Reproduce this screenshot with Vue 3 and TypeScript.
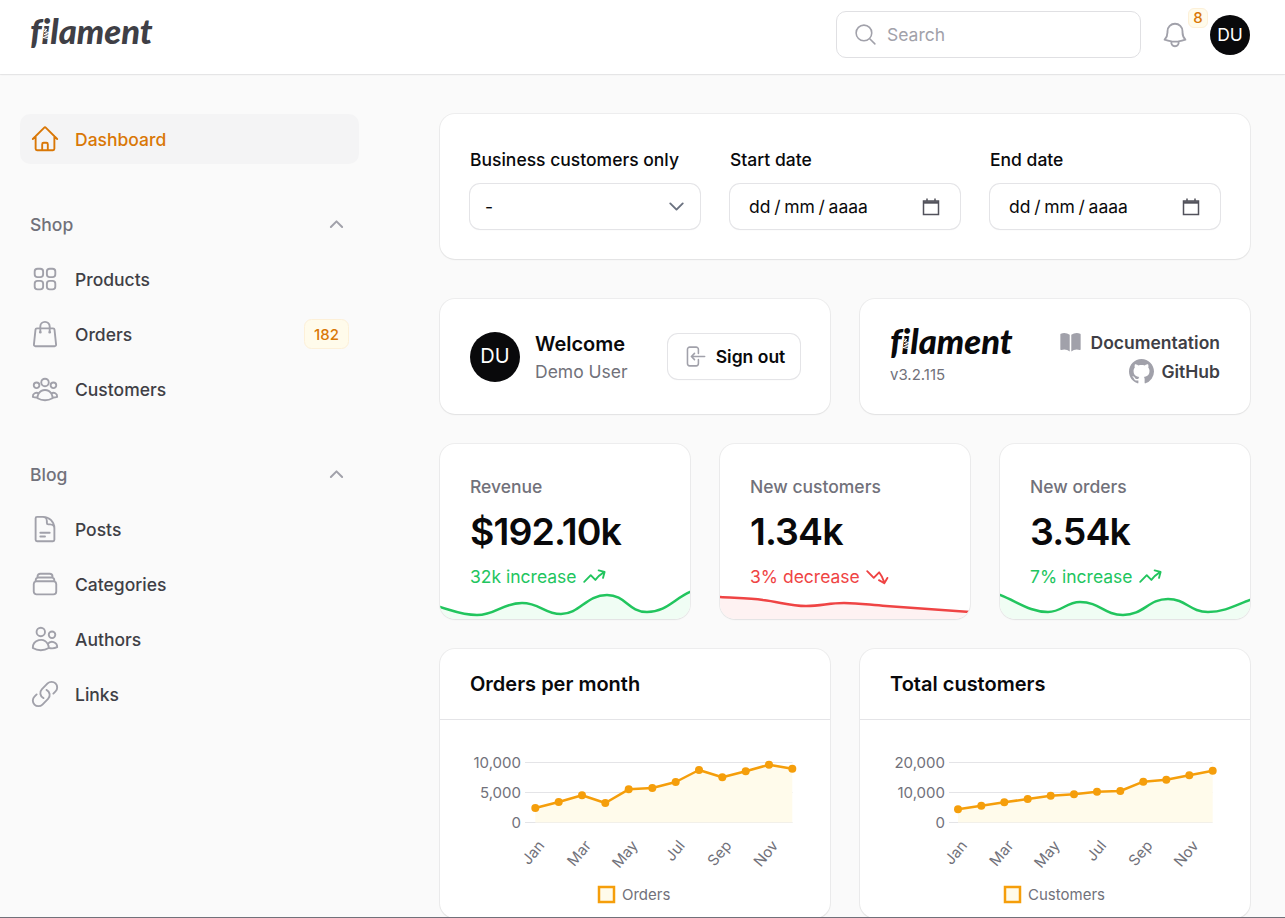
<template>
  <div class="page">
    <header class="topbar">
      <div class="logo">f<span class="logo-i">i<svg viewBox="0 0 9 14"><path d="M0 2.5 5 3.5 2 5.5 7 6.5 2 8.5 7 9.5 1 11.5 6 12.5" /></svg></span>lament</div>
      <div class="top-actions">
        <div class="search">
          <svg class="search-icon" viewBox="0 0 24 24"><path :d="icons.search" /></svg>
          <span>Search</span>
        </div>
        <div class="bell">
          <svg viewBox="0 0 24 24"><path :d="icons.bell" /></svg>
          <span class="bell-badge">8</span>
        </div>
        <div class="avatar small">DU</div>
      </div>
    </header>

    <div class="layout">
      <aside class="sidebar">
        <a class="nav-item active">
          <svg viewBox="0 0 24 24"><path :d="icons.home" /></svg>
          <span>Dashboard</span>
        </a>
        <section v-for="group in navGroups" :key="group.label" class="nav-group">
          <div class="group-label">
            <span>{{ group.label }}</span>
            <svg viewBox="0 0 20 20"><path :d="icons.chevronUp" /></svg>
          </div>
          <div class="group-items">
            <a v-for="item in group.items" :key="item.label" class="nav-item">
              <svg viewBox="0 0 24 24"><path :d="item.icon" /></svg>
              <span>{{ item.label }}</span>
              <em v-if="item.badge" class="nav-badge">{{ item.badge }}</em>
            </a>
          </div>
        </section>
      </aside>

      <main class="content">
        <section class="card filters">
          <div class="field">
            <label>Business customers only</label>
            <div class="input">
              <span class="dash">-</span>
              <svg class="chevron" viewBox="0 0 20 20"><path d="m5 7.5 5 5 5-5" /></svg>
            </div>
          </div>
          <div v-for="label in ['Start date', 'End date']" :key="label" class="field">
            <label>{{ label }}</label>
            <div class="input date">
              <span>dd / mm / aaaa</span>
              <svg class="calendar" viewBox="0 0 18 18">
                <path d="M5 .5v3M13 .5v3M1.5 3h15v13.5h-15Z" />
                <path class="calendar-top" d="M1.5 4.5h15" />
              </svg>
            </div>
          </div>
        </section>

        <div class="two-col">
          <section class="card account">
            <div class="avatar">DU</div>
            <div class="account-text">
              <strong>Welcome</strong>
              <span>Demo User</span>
            </div>
            <button class="sign-out">
              <svg viewBox="0 0 24 24"><path :d="icons.signOut" /></svg>
              Sign out
            </button>
          </section>
          <section class="card about">
            <div class="about-brand">
              <div class="logo dark">f<span class="logo-i">i<svg viewBox="0 0 9 14"><path d="M0 2.5 5 3.5 2 5.5 7 6.5 2 8.5 7 9.5 1 11.5 6 12.5" /></svg></span>lament</div>
              <span class="version">v3.2.115</span>
            </div>
            <div class="about-links">
              <a>
                <svg class="solid" viewBox="0 0 24 24"><path :d="icons.book" /></svg>
                Documentation
              </a>
              <a>
                <svg class="solid" viewBox="0 0 16 16"><path :d="icons.github" /></svg>
                GitHub
              </a>
            </div>
          </section>
        </div>

        <div class="three-col">
          <section v-for="stat in stats" :key="stat.label" class="card stat">
            <div class="stat-body">
              <div class="stat-label">{{ stat.label }}</div>
              <div class="stat-value">{{ stat.value }}</div>
              <div class="stat-desc" :class="stat.tone">
                {{ stat.desc }}
                <svg viewBox="0 0 20 20"><path :d="stat.tone === 'up' ? icons.trendUp : icons.trendDown" /></svg>
              </div>
            </div>
            <svg class="spark" :class="stat.tone" viewBox="0 0 250 30">
              <path class="spark-fill" :d="stat.spark + ' V30 H0 Z'" />
              <path class="spark-line" :d="stat.spark" />
            </svg>
          </section>
        </div>

        <div class="two-col">
          <section v-for="chart in charts" :key="chart.title" class="card chart-card">
            <h3>{{ chart.title }}</h3>
            <svg class="chart" viewBox="0 0 390 198">
              <g v-for="(tick, i) in chart.ticks" :key="tick">
                <line class="grid" :x1="chart.axisX" :x2="352.5" :y1="42.5 + i * 30" :y2="42.5 + i * 30" />
                <text class="tick" :x="chart.axisX - 4" :y="47.5 + i * 30" text-anchor="end">{{ tick }}</text>
              </g>
              <path class="area" :d="areaPath(chart.points)" />
              <polyline class="line" :points="chart.points.map(p => p.join(',')).join(' ')" />
              <circle v-for="p in chart.points" :key="p[0]" class="dot" :cx="p[0]" :cy="p[1]" r="4" />
              <text
                v-for="(month, i) in months"
                :key="month"
                class="tick"
                text-anchor="end"
                :transform="`translate(${chart.points[i * 2][0] + 10} 126) rotate(-50)`"
              >{{ month }}</text>
              <rect class="legend-box" :x="chart.legendX" y="167" width="15" height="15" />
              <text class="tick" :x="chart.legendX + 23" y="180">{{ chart.legend }}</text>
            </svg>
          </section>
        </div>
      </main>
    </div>
  </div>
</template>

<script setup lang="ts">
const icons = {
  search: 'm21 21-5.197-5.197m0 0A7.5 7.5 0 1 0 5.196 5.196a7.5 7.5 0 0 0 10.607 10.607Z',
  bell: 'M14.857 17.082a23.848 23.848 0 0 0 5.454-1.31A8.967 8.967 0 0 1 18 9.75V9A6 6 0 0 0 6 9v.75a8.967 8.967 0 0 1-2.312 6.022c1.733.64 3.56 1.085 5.455 1.31m5.714 0a24.255 24.255 0 0 1-5.714 0m5.714 0a3 3 0 1 1-5.714 0',
  home: 'm2.25 12 8.954-8.955c.44-.439 1.152-.439 1.591 0L21.75 12M4.5 9.75v10.125c0 .621.504 1.125 1.125 1.125H9.75v-4.875c0-.621.504-1.125 1.125-1.125h2.25c.621 0 1.125.504 1.125 1.125V21h4.125c.621 0 1.125-.504 1.125-1.125V9.75M8.25 21h8.25',
  chevronUp: 'm5.5 12 4.5-4.5 4.5 4.5',
  signOut: 'M15.75 9V5.25A2.25 2.25 0 0 0 13.5 3h-6a2.25 2.25 0 0 0-2.25 2.25v13.5A2.25 2.25 0 0 0 7.5 21h6a2.25 2.25 0 0 0 2.25-2.25V15M12 9l-3 3m0 0 3 3m-3-3h12.75',
  book: 'M11.25 4.533A9.707 9.707 0 0 0 6 3a9.735 9.735 0 0 0-3.25.555.75.75 0 0 0-.5.707v14.25a.75.75 0 0 0 1 .707A8.237 8.237 0 0 1 6 18.75c1.995 0 3.823.707 5.25 1.886V4.533ZM12.75 20.636A8.214 8.214 0 0 1 18 18.75c.966 0 1.89.166 2.75.47a.75.75 0 0 0 1-.708V4.262a.75.75 0 0 0-.5-.707A9.735 9.735 0 0 0 18 3a9.707 9.707 0 0 0-5.25 1.533v16.103Z',
  github: 'M8 0C3.58 0 0 3.58 0 8c0 3.54 2.29 6.53 5.47 7.59.4.07.55-.17.55-.38 0-.19-.01-.82-.01-1.49-2.01.37-2.53-.49-2.69-.94-.09-.23-.48-.94-.82-1.13-.28-.15-.68-.52-.01-.53.63-.01 1.08.58 1.23.82.72 1.21 1.87.87 2.33.66.07-.52.28-.87.51-1.07-1.78-.2-3.64-.89-3.64-3.95 0-.87.31-1.59.82-2.15-.08-.2-.36-1.02.08-2.12 0 0 .67-.21 2.2.82.64-.18 1.32-.27 2-.27.68 0 1.36.09 2 .27 1.53-1.04 2.2-.82 2.2-.82.44 1.1.16 1.92.08 2.12.51.56.82 1.27.82 2.15 0 3.07-1.87 3.75-3.65 3.95.29.25.54.73.54 1.48 0 1.07-.01 1.93-.01 2.2 0 .21.15.46.55.38A8.013 8.013 0 0 0 16 8c0-4.42-3.58-8-8-8z',
  trendUp: 'M12.577 4.878a.75.75 0 0 1 .919-.53l4.78 1.281a.75.75 0 0 1 .531.919l-1.281 4.78a.75.75 0 0 1-1.449-.387l.81-3.022a19.407 19.407 0 0 0-5.594 5.203.75.75 0 0 1-1.139.093L7 10.06l-4.72 4.72a.75.75 0 0 1-1.06-1.061l5.25-5.25a.75.75 0 0 1 1.06 0l3.074 3.073a20.923 20.923 0 0 1 5.545-4.931l-3.042-.815a.75.75 0 0 1-.53-.919Z',
  trendDown: 'M1.22 5.222a.75.75 0 0 1 1.06 0L7 9.942l3.768-3.769a.75.75 0 0 1 1.113.058 20.908 20.908 0 0 1 3.813 7.254l1.574-2.727a.75.75 0 0 1 1.3.75l-2.475 4.286a.75.75 0 0 1-1.025.275l-4.287-2.475a.75.75 0 0 1 .75-1.3l2.71 1.565a19.422 19.422 0 0 0-3.013-6.024L7.53 11.533a.75.75 0 0 1-1.06 0l-5.25-5.25a.75.75 0 0 1 0-1.06Z',
}

interface NavItem {
  label: string
  icon: string
  badge?: string
}

const navGroups: { label: string; items: NavItem[] }[] = [
  {
    label: 'Shop',
    items: [
      { label: 'Products', icon: 'M3.75 6A2.25 2.25 0 0 1 6 3.75h2.25A2.25 2.25 0 0 1 10.5 6v2.25a2.25 2.25 0 0 1-2.25 2.25H6a2.25 2.25 0 0 1-2.25-2.25V6ZM3.75 15.75A2.25 2.25 0 0 1 6 13.5h2.25a2.25 2.25 0 0 1 2.25 2.25V18a2.25 2.25 0 0 1-2.25 2.25H6A2.25 2.25 0 0 1 3.75 18v-2.25ZM13.5 6a2.25 2.25 0 0 1 2.25-2.25H18A2.25 2.25 0 0 1 20.25 6v2.25A2.25 2.25 0 0 1 18 10.5h-2.25a2.25 2.25 0 0 1-2.25-2.25V6ZM13.5 15.75a2.25 2.25 0 0 1 2.25-2.25H18a2.25 2.25 0 0 1 2.25 2.25V18A2.25 2.25 0 0 1 18 20.25h-2.25A2.25 2.25 0 0 1 13.5 18v-2.25Z' },
      { label: 'Orders', badge: '182', icon: 'M15.75 10.5V6a3.75 3.75 0 1 0-7.5 0v4.5m11.356-1.993 1.263 12c.07.665-.45 1.243-1.119 1.243H4.25a1.125 1.125 0 0 1-1.12-1.243l1.264-12A1.125 1.125 0 0 1 5.513 7.5h12.974c.576 0 1.059.435 1.119 1.007ZM8.625 10.5a.375.375 0 1 1-.75 0 .375.375 0 0 1 .75 0Zm7.5 0a.375.375 0 1 1-.75 0 .375.375 0 0 1 .75 0Z' },
      { label: 'Customers', icon: 'M18 18.72a9.094 9.094 0 0 0 3.741-.479 3 3 0 0 0-4.682-2.72m.94 3.198.001.031c0 .225-.012.447-.037.666A11.944 11.944 0 0 1 12 21c-2.17 0-4.207-.576-5.963-1.584A6.062 6.062 0 0 1 6 18.719m12 0a5.971 5.971 0 0 0-.941-3.197m0 0A5.995 5.995 0 0 0 12 12.75a5.995 5.995 0 0 0-5.058 2.772m0 0a3 3 0 0 0-4.681 2.72 8.986 8.986 0 0 0 3.74.477m.94-3.197a5.971 5.971 0 0 0-.94 3.197M15 6.75a3 3 0 1 1-6 0 3 3 0 0 1 6 0Zm6 2.25a2.25 2.25 0 1 1-4.5 0 2.25 2.25 0 0 1 4.5 0Zm-13.5 0a2.25 2.25 0 1 1-4.5 0 2.25 2.25 0 0 1 4.5 0Z' },
    ],
  },
  {
    label: 'Blog',
    items: [
      { label: 'Posts', icon: 'M19.5 14.25v-2.625a3.375 3.375 0 0 0-3.375-3.375h-1.5A1.125 1.125 0 0 1 13.5 7.125v-1.5a3.375 3.375 0 0 0-3.375-3.375H8.25m0 12.75h7.5m-7.5 3H12M10.5 2.25H5.625c-.621 0-1.125.504-1.125 1.125v17.25c0 .621.504 1.125 1.125 1.125h12.75c.621 0 1.125-.504 1.125-1.125V11.25a9 9 0 0 0-9-9Z' },
      { label: 'Categories', icon: 'M6 6.878V6a2.25 2.25 0 0 1 2.25-2.25h7.5A2.25 2.25 0 0 1 18 6v.878m-12 0c.235-.083.487-.128.75-.128h10.5c.263 0 .515.045.75.128m-12 0A2.25 2.25 0 0 0 4.5 9v.878m13.5-3A2.25 2.25 0 0 1 19.5 9v.878m0 0a2.246 2.246 0 0 0-.75-.128H5.25c-.263 0-.515.045-.75.128m15 0A2.25 2.25 0 0 1 21 12v6a2.25 2.25 0 0 1-2.25 2.25H5.25A2.25 2.25 0 0 1 3 18v-6c0-.98.626-1.813 1.5-2.122' },
      { label: 'Authors', icon: 'M15 19.128a9.38 9.38 0 0 0 2.625.372 9.337 9.337 0 0 0 4.121-.952 4.125 4.125 0 0 0-7.533-2.493M15 19.128v-.003c0-1.113-.285-2.16-.786-3.07M15 19.128v.106A12.318 12.318 0 0 1 8.624 21c-2.331 0-4.512-.645-6.374-1.766l-.001-.109a6.375 6.375 0 0 1 11.964-3.07M12 6.375a3.375 3.375 0 1 1-6.75 0 3.375 3.375 0 0 1 6.75 0Zm8.25 2.25a2.625 2.625 0 1 1-5.25 0 2.625 2.625 0 0 1 5.25 0Z' },
      { label: 'Links', icon: 'M13.19 8.688a4.5 4.5 0 0 1 1.242 7.244l-4.5 4.5a4.5 4.5 0 0 1-6.364-6.364l1.757-1.757m13.35-.622 1.757-1.757a4.5 4.5 0 0 0-6.364-6.364l-4.5 4.5a4.5 4.5 0 0 0 1.242 7.244' },
    ],
  },
]

const stats = [
  {
    label: 'Revenue',
    value: '$192.10k',
    desc: '32k increase',
    tone: 'up',
    spark: 'M0 18 C14 22 22 26 37 26 C56 26 62 14 82 14 C100 14 104 25 121 25 C140 25 146 6 167 6 C186 6 188 23 207 23 C226 23 234 10 250 3',
  },
  {
    label: 'New customers',
    value: '1.34k',
    desc: '3% decrease',
    tone: 'down',
    spark: 'M0 8 C16 9 30 9 43 11 C60 13 70 17 86 17 C102 17 108 14 124 14 C140 14 150 16 166 17 C194 19 222 21 250 23',
  },
  {
    label: 'New orders',
    value: '3.54k',
    desc: '7% increase',
    tone: 'up',
    spark: 'M0 6 C18 13 30 23 48 23 C62 23 66 13 80 13 C100 13 104 26 123 26 C144 26 148 10 168 10 C186 10 190 23 208 23 C226 23 238 15 250 11',
  },
]

const months = ['Jan', 'Mar', 'May', 'Jul', 'Sep', 'Nov']

const charts = [
  {
    title: 'Orders per month',
    ticks: ['10,000', '5,000', '0'],
    axisX: 85,
    legend: 'Orders',
    legendX: 159,
    points: [[95.3, 88], [118.7, 82], [142, 75.3], [165.3, 83], [188.7, 69.3], [212.3, 68], [235.7, 62], [259, 50], [282.3, 57.3], [305.7, 51.3], [329, 44.7], [352.3, 48.7]],
  },
  {
    title: 'Total customers',
    ticks: ['20,000', '10,000', '0'],
    axisX: 89,
    legend: 'Customers',
    legendX: 145,
    points: [[98, 89.3], [121.3, 85.7], [144.3, 82.3], [167.7, 79], [190.7, 75.7], [214, 74.3], [237, 71.7], [260.3, 71], [283.3, 61.7], [306.3, 59.7], [329.3, 55.3], [352.7, 50.7]],
  },
]

// closes the line down onto the zero gridline
const areaPath = (points: number[][]) => {
  const line = points.map(p => `${p[0]} ${p[1]}`).join(' L')
  return `M${points[0][0]} 102.5 L${line} L${points[points.length - 1][0]} 102.5 Z`
}
</script>

<style>
html,
body {
  margin: 0;
  overflow: hidden;
  background: #fafafa;
}
</style>

<style scoped>
.page {
  height: 918px;
  box-sizing: border-box;
  overflow: hidden;
  display: flex;
  flex-direction: column;
  background: #fafafa;
  border-bottom: 1px solid #71717a;
  font-family: Inter, "Liberation Sans", sans-serif;
  font-size: 17.5px;
  line-height: 25px;
  color: #3f3f46;
}

svg {
  display: block;
  flex: none;
  fill: none;
  stroke: currentColor;
  stroke-width: 1.5;
  stroke-linecap: round;
  stroke-linejoin: round;
}

.topbar {
  height: 74px;
  flex: none;
  box-sizing: border-box;
  display: flex;
  align-items: center;
  justify-content: space-between;
  padding: 0 35px 5px 30px;
  background: #fff;
  box-shadow: 0 1px 2px rgba(0, 0, 0, 0.05), 0 0 0 1px rgba(9, 9, 11, 0.05);
  position: relative;
}

.topbar .logo {
  margin-bottom: 7px;
}

.logo {
  font-family: Lato, sans-serif;
  font-size: 34.5px;
  line-height: 34px;
  font-weight: 900;
  font-style: italic;
  font-variant-ligatures: none;
  color: #3f3f46;
}

.logo.dark {
  color: #09090b;
}

.logo-i {
  position: relative;
  display: inline-block;
}

.logo-i svg {
  position: absolute;
  left: 0;
  bottom: 8px;
  width: 9px;
  height: 14px;
  color: #fff;
  stroke-width: 1;
  stroke-linecap: butt;
}

.top-actions {
  display: flex;
  align-items: center;
}

.search {
  width: 305px;
  height: 47px;
  box-sizing: border-box;
  display: flex;
  align-items: center;
  gap: 9px;
  padding-left: 16px;
  border: 1px solid #e0e0e3;
  border-radius: 10px;
  color: #a1a1aa;
  background: #fff;
}

.search-icon {
  width: 25px;
  height: 25px;
}

.bell {
  position: relative;
  width: 30px;
  height: 30px;
  margin: 0 20px 0 19px;
  color: #a1a1aa;
}

.bell svg {
  width: 30px;
  height: 30px;
}

.bell-badge {
  position: absolute;
  top: -12px;
  left: 28px;
  width: 20px;
  height: 20px;
  box-sizing: border-box;
  display: flex;
  align-items: center;
  justify-content: center;
  background: #fffbeb;
  border: 1px solid #fdf0d8;
  border-radius: 6px;
  font-size: 15px;
  font-weight: 500;
  color: #d97706;
}

.avatar {
  width: 50px;
  height: 50px;
  flex: none;
  display: flex;
  align-items: center;
  justify-content: center;
  border-radius: 50%;
  background: #09090b;
  color: #fff;
  font-size: 20px;
}

.avatar.small {
  width: 40px;
  height: 40px;
  font-size: 17.5px;
}

.layout {
  flex: 1;
  display: flex;
  min-height: 0;
}

.sidebar {
  width: 339px;
  flex: none;
  padding: 40px 0 0 20px;
  display: flex;
  flex-direction: column;
  gap: 48px;
}

.nav-item {
  height: 50px;
  display: flex;
  align-items: center;
  gap: 15px;
  padding: 0 10px;
  border-radius: 10px;
  font-weight: 500;
}

.nav-item svg {
  width: 30px;
  height: 30px;
  color: #a1a1aa;
}

.nav-item.active {
  background: #f4f4f5;
  color: #d97706;
}

.nav-item.active svg {
  color: #d97706;
}

.nav-badge {
  margin-left: auto;
  width: 45px;
  height: 30px;
  box-sizing: border-box;
  display: flex;
  align-items: center;
  justify-content: center;
  border: 1px solid #fdf0d8;
  border-radius: 7.5px;
  background: #fffbeb;
  color: #d97706;
  font-size: 15px;
  font-style: normal;
}

.group-label {
  display: flex;
  align-items: center;
  justify-content: space-between;
  padding: 0 10px;
  margin-bottom: 17px;
  font-weight: 500;
  color: #71717a;
}

.group-label svg {
  width: 25px;
  height: 25px;
  color: #a1a1aa;
  stroke-width: 1.6;
}

.group-items {
  display: flex;
  flex-direction: column;
  gap: 5px;
}

.content {
  width: 810px;
  flex: none;
  margin-left: 81px;
  padding-top: 40px;
  display: flex;
  flex-direction: column;
  gap: 30px;
}

.card {
  background: #fff;
  border-radius: 15px;
  box-shadow: 0 1px 2px rgba(0, 0, 0, 0.05), 0 0 0 1px rgba(9, 9, 11, 0.05);
}

.filters {
  display: grid;
  grid-template-columns: repeat(3, 1fr);
  gap: 30px;
  padding: 30px;
  margin-bottom: 10px;
}

.field label {
  display: block;
  line-height: 32px;
  margin-bottom: 8px;
  font-weight: 500;
  color: #09090b;
}

.input {
  height: 45px;
  display: flex;
  align-items: center;
  justify-content: space-between;
  padding: 0 15px;
  border-radius: 10px;
  box-shadow: 0 0 0 1px #e4e4e7, 0 1px 2px rgba(0, 0, 0, 0.05);
  color: #09090b;
}

.input.date {
  padding: 0 20px 0 19px;
  word-spacing: -1.2px;
}

.chevron {
  width: 25px;
  height: 25px;
  margin-right: -4px;
  color: #6b7280;
}

.calendar {
  width: 18px;
  height: 18px;
  color: #52525b;
  stroke-linecap: butt;
  stroke-linejoin: miter;
}

.calendar-top {
  stroke-width: 2.4;
}

.two-col {
  display: grid;
  grid-template-columns: 390px 390px;
  gap: 30px;
}

.three-col {
  display: grid;
  grid-template-columns: repeat(3, 250px);
  gap: 30px;
}

.account {
  height: 115px;
  box-sizing: border-box;
  display: flex;
  align-items: center;
  gap: 15px;
  padding: 0 30px;
}

.account-text {
  display: flex;
  flex-direction: column;
  flex: 1;
}

.account-text strong {
  font-size: 20px;
  line-height: 30px;
  font-weight: 600;
  color: #09090b;
}

.account-text span {
  color: #71717a;
}

.sign-out {
  width: 132px;
  height: 45px;
  display: flex;
  align-items: center;
  justify-content: center;
  gap: 9px;
  border: 0;
  border-radius: 10px;
  background: #fff;
  box-shadow: 0 0 0 1px #e4e4e7, 0 1px 2px rgba(0, 0, 0, 0.05);
  font: inherit;
  font-weight: 600;
  color: #09090b;
}

.sign-out svg {
  width: 25px;
  height: 25px;
  margin-left: -1px;
  color: #a1a1aa;
}

.about {
  height: 115px;
  box-sizing: border-box;
  display: flex;
  align-items: center;
  justify-content: space-between;
  padding: 0 30px;
}

.about-brand {
  padding-bottom: 4px;
}

.version {
  display: block;
  margin-top: 7px;
  font-size: 15px;
  line-height: 20px;
  color: #71717a;
}

.about-links {
  display: flex;
  flex-direction: column;
  align-items: flex-end;
  gap: 4px;
  padding-top: 1px;
}

.about-links a {
  display: flex;
  align-items: center;
  gap: 8px;
  font-weight: 600;
}

.about-links a:last-child {
  gap: 7px;
}

.solid {
  width: 25px;
  height: 25px;
  fill: #a1a1aa;
  stroke: none;
}

.stat {
  overflow: hidden;
  height: 175px;
  display: flex;
  flex-direction: column;
}

.stat-body {
  padding: 30px 30px 0;
}

.stat-label {
  font-weight: 500;
  color: #71717a;
}

.stat-value {
  margin-top: 10px;
  font-size: 37.5px;
  line-height: 45px;
  font-weight: 600;
  letter-spacing: -0.9px;
  color: #09090b;
}

.stat-desc {
  margin-top: 10px;
  display: flex;
  align-items: center;
  gap: 5px;
}

.stat-desc svg {
  width: 25px;
  height: 25px;
  fill: currentColor;
  stroke: none;
}

.stat-desc.up {
  color: #22c55e;
}

.stat-desc.down {
  color: #ef4444;
}

.spark {
  width: 250px;
  height: 30px;
  overflow: visible;
}

.spark-line {
  stroke-width: 2.5;
}

.spark.up .spark-line {
  stroke: #22c55e;
}

.spark.up .spark-fill {
  fill: #f0fdf4;
  stroke: none;
}

.spark.down .spark-line {
  stroke: #ef4444;
}

.spark.down .spark-fill {
  fill: #fef2f2;
  stroke: none;
}

.chart-card h3 {
  margin: 0;
  height: 71px;
  box-sizing: border-box;
  padding: 0 30px;
  display: flex;
  align-items: center;
  font-size: 20px;
  font-weight: 600;
  color: #09090b;
  border-bottom: 1px solid #e4e4e7;
}

.chart {
  width: 390px;
  height: 198px;
}

.grid {
  stroke: #e4e4e7;
  stroke-width: 1;
  stroke-linecap: butt;
}

.tick {
  font-size: 15px;
  fill: #71717a;
  stroke: none;
}

.area {
  fill: #fffbeb;
  stroke: none;
}

.line {
  stroke: #f59e0b;
  stroke-width: 2.5;
}

.dot {
  fill: #f59e0b;
  stroke: none;
}

.legend-box {
  fill: #fffbeb;
  stroke: #f59e0b;
  stroke-width: 2.5;
  stroke-linejoin: miter;
}
</style>
